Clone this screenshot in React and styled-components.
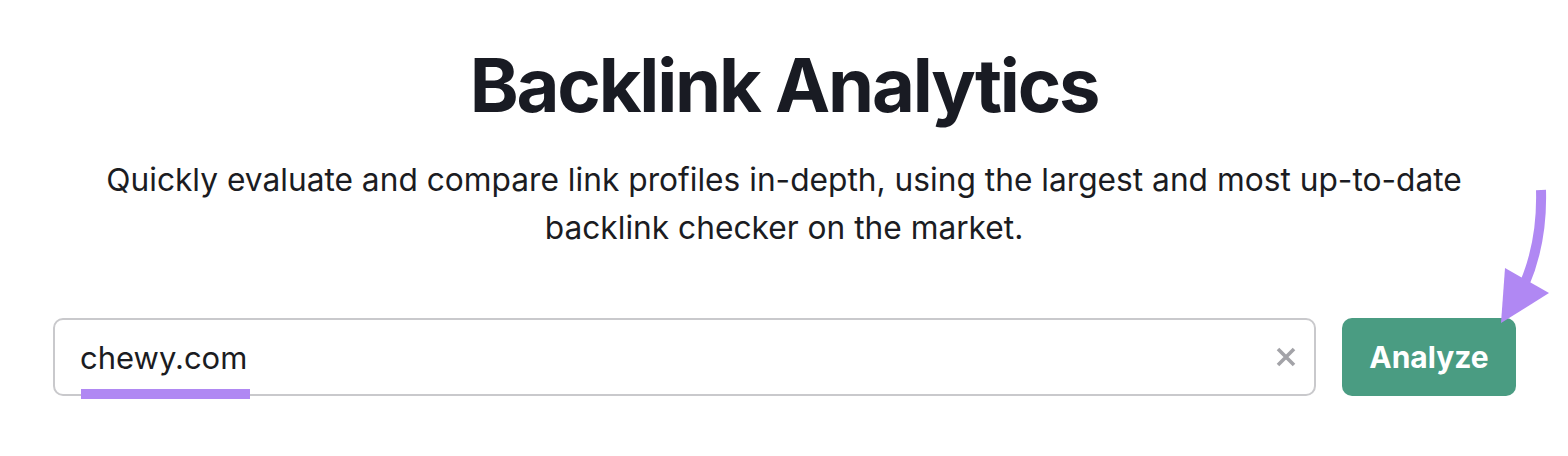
import React from "react";
import styled, { createGlobalStyle } from "styled-components";

const GlobalStyle = createGlobalStyle`
  body {
    margin: 0;
    background: #ffffff;
    font-family: Inter, "Noto Sans", "Liberation Sans", sans-serif;
    color: #1b1c22;
  }
`;

const Page = styled.div`
  position: relative;
  width: 1568px;
  height: 456px;
  overflow: hidden;
  display: flex;
  flex-direction: column;
  align-items: center;
`;

const Title = styled.h1`
  margin: 37px 0 0;
  font-size: 74px;
  font-weight: 700;
  line-height: 96px;
  letter-spacing: -2.2px;
  color: #191b23;
`;

const Subtitle = styled.p`
  margin: 23px 0 0;
  width: 1420px;
  text-align: center;
  font-size: 31.7px;
  line-height: 48px;
  color: #1b1c22;
`;

const SearchRow = styled.div`
  margin-top: 66px;
  width: 100%;
  box-sizing: border-box;
  padding: 0 52px 0 53px;
  display: flex;
  gap: 26px;
`;

const InputBox = styled.div`
  position: relative;
  flex: 1;
  height: 78px;
  box-sizing: border-box;
  border: 2px solid #c9c9cc;
  border-radius: 10px;
  display: flex;
  align-items: center;
  padding: 0 25px;
`;

const Value = styled.span`
  flex: 1;
  font-size: 31px;
  color: #1b1c22;
`;

const Underline = styled.span`
  position: absolute;
  left: 26px;
  bottom: -5px;
  width: 169px;
  height: 10px;
  background: #b088f3;
`;

const Clear = styled.span`
  display: flex;
  align-items: center;
  justify-content: center;
  width: 24px;
  height: 24px;
  margin-right: -9px;
`;

const AnalyzeButton = styled.button`
  width: 174px;
  height: 78px;
  border: none;
  border-radius: 10px;
  background: #4a9c82;
  color: #ffffff;
  font-family: inherit;
  font-size: 30px;
  font-weight: 700;
  cursor: pointer;
`;

const Arrow = styled.svg`
  position: absolute;
  left: 1490px;
  top: 185px;
`;

export default function App() {
  return (
    <>
      <GlobalStyle />
      <Page>
        <Title>Backlink Analytics</Title>
        <Subtitle>
          Quickly evaluate and compare link profiles in-depth, using the largest and most up-to-date
          <br />
          backlink checker on the market.
        </Subtitle>
        <SearchRow>
          <InputBox>
            <Value>chewy.com</Value>
            <Clear>
              <svg width="20" height="20" viewBox="0 0 20 20">
                <path d="M2 2 L18 18 M18 2 L2 18" stroke="#a3a3a8" strokeWidth="3.6" />
              </svg>
            </Clear>
            <Underline />
          </InputBox>
          <AnalyzeButton>Analyze</AnalyzeButton>
        </SearchRow>
        <Arrow width="78" height="145" viewBox="1490 185 78 145">
          <path d="M1541 190 C1542 225 1537 255 1524 285" fill="none" stroke="#b088f3" strokeWidth="10" />
          <polygon points="1505,268 1549,293 1501,323" fill="#b088f3" />
        </Arrow>
      </Page>
    </>
  );
}
